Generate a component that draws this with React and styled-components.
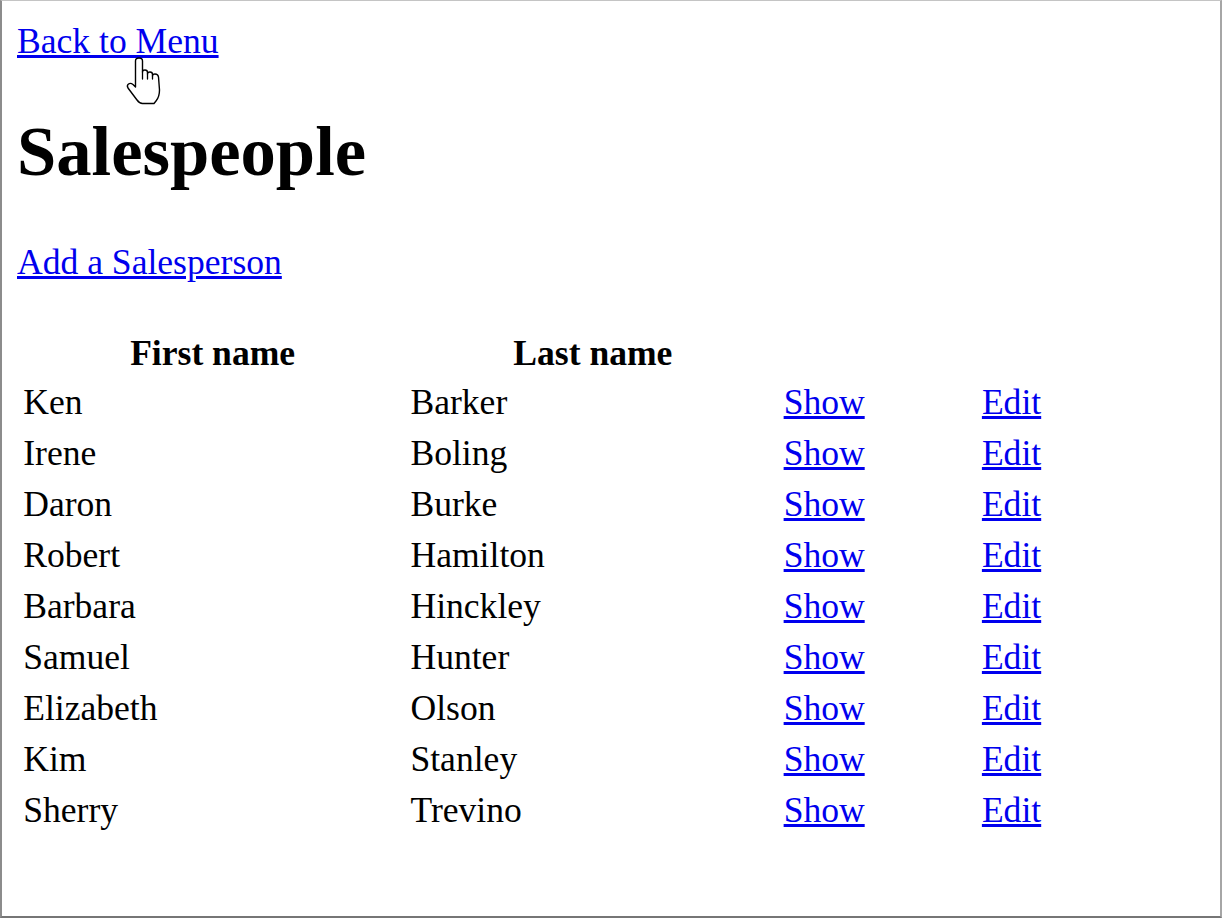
import React from "react";
import styled, { createGlobalStyle } from "styled-components";

const GlobalStyle = createGlobalStyle`
  html, body {
    margin: 0;
    padding: 0;
    background: #ffffff;
  }
  #root {
    width: 1222px;
    height: 918px;
  }
`;

const Frame = styled.div`
  position: relative;
  box-sizing: border-box;
  width: 1222px;
  height: 918px;
  padding: 18.6px 15px 17.6px 15px;
  border-top: 1px solid #c4c4c4;
  border-left: 2px solid #8c8c8c;
  border-right: 2px solid #a6a6a6;
  border-bottom: 2px solid #767676;
  font-family: "Liberation Serif", "Times New Roman", serif;
  font-size: 35.6px;
  line-height: 42.5px;
  color: #000000;
  overflow: hidden;
`;

const Link = styled.a`
  color: #0000ee;
  text-decoration: underline;
  cursor: pointer;
`;

const Title = styled.h1`
  font-size: 70.6px;
  font-weight: bold;
  line-height: 84.5px;
  margin: 47.2px 0;
`;

const ActionLine = styled.div`
  margin-bottom: 42.5px;
`;

const Table = styled.table`
  border-collapse: separate;
  border-spacing: 4.4px;
  font-size: 35.6px;
  line-height: 42.6px;
`;

const HeadCell = styled.th`
  padding: 2.2px 2.2px 0.2px;
  font-weight: bold;
  text-align: center;
  width: ${(p) => p.$w}px;
`;

const Cell = styled.td`
  padding: 2.2px;
  text-align: left;
  vertical-align: middle;
`;

const CursorIcon = styled.svg`
  position: absolute;
  left: 123px;
  top: 56px;
  width: 37px;
  height: 48px;
  overflow: visible;
`;

const people = [
  ["Ken", "Barker"],
  ["Irene", "Boling"],
  ["Daron", "Burke"],
  ["Robert", "Hamilton"],
  ["Barbara", "Hinckley"],
  ["Samuel", "Hunter"],
  ["Elizabeth", "Olson"],
  ["Kim", "Stanley"],
  ["Sherry", "Trevino"],
];

function HandCursor() {
  return (
    <CursorIcon viewBox="0 0 36 48" aria-hidden="true">
      <path
        d="M10,4 Q10,1 13.5,1 Q17,1 17,4 L17,15 Q17,13 19.5,13 Q22,13 22,15.5 L22,17 Q22,15 24.5,15 Q27,15 27,17.5 L27,19 Q27,17 29.5,17 Q32.5,17 33,20 L34,33 Q34,40 30.5,44 L28.5,46.5 L17,46.5 Q14,46.5 11.5,43 L2.5,31 Q1,28.5 3,27 Q5,25.5 7.5,27.5 L10,30 Z"
        fill="#ffffff"
        stroke="#000000"
        strokeWidth="1.4"
        strokeLinejoin="round"
      />
      <path
        d="M17,15 L17,22 M22,17 L22,22 M27,19 L27,22"
        fill="none"
        stroke="#000000"
        strokeWidth="1.3"
        strokeLinecap="round"
      />
    </CursorIcon>
  );
}

export default function App() {
  return (
    <>
      <GlobalStyle />
      <Frame>
        <Link href="#menu">Back to Menu</Link>
        <Title>Salespeople</Title>
        <ActionLine>
          <Link href="#new">Add a Salesperson</Link>
        </ActionLine>
        <Table>
          <thead>
            <tr>
              <HeadCell $w={378.9}>First name</HeadCell>
              <HeadCell $w={364.8}>Last name</HeadCell>
              <HeadCell $w={189.9}></HeadCell>
              <HeadCell $w={188.9}></HeadCell>
            </tr>
          </thead>
          <tbody>
            {people.map(([first, last]) => (
              <tr key={first + last}>
                <Cell>{first}</Cell>
                <Cell>{last}</Cell>
                <Cell>
                  <Link href="#show">Show</Link>
                </Cell>
                <Cell>
                  <Link href="#edit">Edit</Link>
                </Cell>
              </tr>
            ))}
          </tbody>
        </Table>
        <HandCursor />
      </Frame>
    </>
  );
}
